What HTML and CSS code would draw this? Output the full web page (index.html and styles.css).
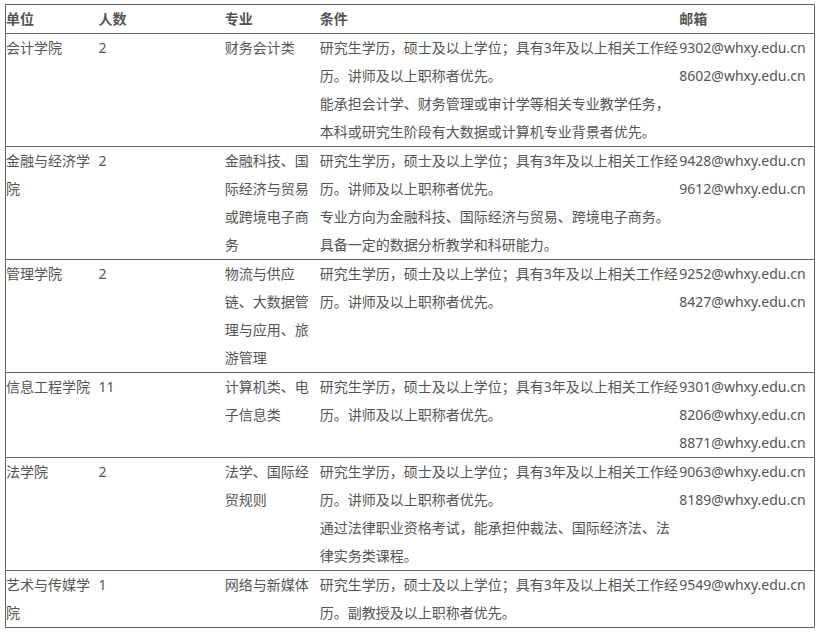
FILE: index.html
```html
<!DOCTYPE html>
<html lang="zh-CN">
<head>
<meta charset="utf-8">
<title>招聘岗位</title>
<link rel="stylesheet" href="styles.css">
</head>
<body>
<table class="jobs">
  <colgroup>
    <col class="c-unit">
    <col class="c-num">
    <col class="c-major">
    <col class="c-cond">
    <col class="c-mail">
  </colgroup>
  <thead>
    <tr><th>单位</th><th>人数</th><th>专业</th><th>条件</th><th>邮箱</th></tr>
  </thead>
  <tbody>
    <tr>
      <td>会计学院</td><td>2</td><td>财务会计类</td>
      <td>研究生学历，硕士及以上学位；具有3年及以上相关工作经历。讲师及以上职称者优先。<br>能承担会计学、财务管理或审计学等相关专业教学任务，<br>本科或研究生阶段有大数据或计算机专业背景者优先。</td>
      <td>9302@whxy.edu.cn<br>8602@whxy.edu.cn</td>
    </tr>
    <tr>
      <td>金融与经济学院</td><td>2</td><td>金融科技、国际经济与贸易或跨境电子商务</td>
      <td>研究生学历，硕士及以上学位；具有3年及以上相关工作经历。讲师及以上职称者优先。<br>专业方向为金融科技、国际经济与贸易、跨境电子商务。<br>具备一定的数据分析教学和科研能力。</td>
      <td>9428@whxy.edu.cn<br>9612@whxy.edu.cn</td>
    </tr>
    <tr>
      <td>管理学院</td><td>2</td><td>物流与供应链、大数据管理与应用、旅游管理</td>
      <td>研究生学历，硕士及以上学位；具有3年及以上相关工作经历。讲师及以上职称者优先。</td>
      <td>9252@whxy.edu.cn<br>8427@whxy.edu.cn</td>
    </tr>
    <tr>
      <td>信息工程学院</td><td>11</td><td>计算机类、电子信息类</td>
      <td>研究生学历，硕士及以上学位；具有3年及以上相关工作经历。讲师及以上职称者优先。</td>
      <td>9301@whxy.edu.cn<br>8206@whxy.edu.cn<br>8871@whxy.edu.cn</td>
    </tr>
    <tr>
      <td>法学院</td><td>2</td><td>法学、国际经贸规则</td>
      <td>研究生学历，硕士及以上学位；具有3年及以上相关工作经历。讲师及以上职称者优先。<br>通过法律职业资格考试，能承担仲裁法、国际经济法、法律实务类课程。</td>
      <td>9063@whxy.edu.cn<br>8189@whxy.edu.cn</td>
    </tr>
    <tr>
      <td>艺术与传媒学院</td><td>1</td><td>网络与新媒体</td>
      <td>研究生学历，硕士及以上学位；具有3年及以上相关工作经历。副教授及以上职称者优先。</td>
      <td>9549@whxy.edu.cn</td>
    </tr>
  </tbody>
</table>
</body>
</html>
```
FILE: styles.css
```css
html, body {
  margin: 0;
  padding: 0;
  background: #fff;
}
body {
  padding: 4px 5px;
  font-family: "Noto Sans", "Noto Sans CJK SC", sans-serif;
  font-size: 14px;
  color: #555;
}
.jobs {
  border-collapse: collapse;
  table-layout: fixed;
  width: 810px;
  border: 1px solid #666;
}
.c-unit { width: 93px; }
.c-num { width: 126px; }
.c-major { width: 95px; }
.c-cond { width: 359px; }
.c-mail { width: 135px; }
.jobs th, .jobs td {
  padding: 0;
  text-align: left;
  vertical-align: top;
  line-height: 28px;
  word-break: normal;
}
.jobs th {
  font-weight: bold;
}
.jobs tr {
  border-top: 1px solid #666;
}
```
